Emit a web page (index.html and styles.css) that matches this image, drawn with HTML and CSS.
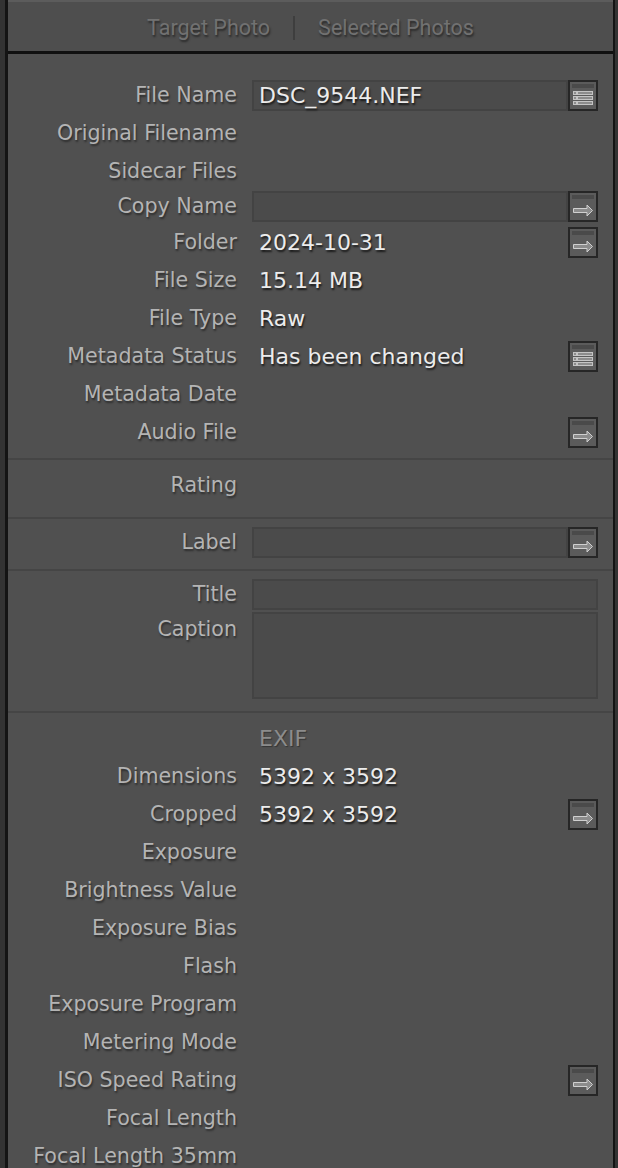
FILE: index.html
```html
<!DOCTYPE html>
<html lang="en">
<head>
<meta charset="utf-8">
<title>Metadata</title>
<link rel="stylesheet" href="styles.css">
</head>
<body>
<div class="panel">
  <div class="tabs">
    <span class="tab">Target Photo</span>
    <span class="tab-sep"></span>
    <span class="tab">Selected Photos</span>
  </div>

  <div class="group g-file">
    <div class="row">
      <div class="label">File Name</div>
      <div class="value">
        <div class="field"><span class="field-text">DSC_9544.NEF</span></div>
        <span class="btn"><svg viewBox="0 0 26 27" width="26" height="27"><rect x="2" y="2" width="22" height="4" fill="#4a4a4a"/><g fill="#8c8c8c" stroke="#c4c4c4" stroke-width="1"><rect x="3.5" y="9.5" width="3" height="3"/><rect x="7.5" y="9.5" width="15" height="3"/><rect x="3.5" y="14.5" width="3" height="3"/><rect x="7.5" y="14.5" width="15" height="3"/><rect x="3.5" y="19.5" width="3" height="3"/><rect x="7.5" y="19.5" width="15" height="3"/></g></svg></span>
      </div>
    </div>
    <div class="row">
      <div class="label">Original Filename</div>
      <div class="value"></div>
    </div>
    <div class="row h37">
      <div class="label">Sidecar Files</div>
      <div class="value"></div>
    </div>
    <div class="row h34">
      <div class="label">Copy Name</div>
      <div class="value">
        <div class="field"></div>
        <span class="btn"><svg viewBox="0 0 26 27" width="26" height="27"><rect x="2" y="2" width="22" height="4" fill="#4a4a4a"/><path d="M3.5 15.5 H17 V12 L22.5 17.5 L17 23 V19.5 H3.5 Z" fill="#8c8c8c" stroke="#d0d0d0" stroke-width="1"/></svg></span>
      </div>
    </div>
    <div class="row">
      <div class="label">Folder</div>
      <div class="value">
        <span class="text">2024-10-31</span>
        <span class="btn"><svg viewBox="0 0 26 27" width="26" height="27"><rect x="2" y="2" width="22" height="4" fill="#4a4a4a"/><path d="M3.5 15.5 H17 V12 L22.5 17.5 L17 23 V19.5 H3.5 Z" fill="#8c8c8c" stroke="#d0d0d0" stroke-width="1"/></svg></span>
      </div>
    </div>
    <div class="row">
      <div class="label">File Size</div>
      <div class="value"><span class="text">15.14 MB</span></div>
    </div>
    <div class="row">
      <div class="label">File Type</div>
      <div class="value"><span class="text">Raw</span></div>
    </div>
    <div class="row">
      <div class="label">Metadata Status</div>
      <div class="value">
        <span class="text">Has been changed</span>
        <span class="btn"><svg viewBox="0 0 26 27" width="26" height="27"><rect x="2" y="2" width="22" height="4" fill="#4a4a4a"/><g fill="#8c8c8c" stroke="#c4c4c4" stroke-width="1"><rect x="3.5" y="9.5" width="3" height="3"/><rect x="7.5" y="9.5" width="15" height="3"/><rect x="3.5" y="14.5" width="3" height="3"/><rect x="7.5" y="14.5" width="15" height="3"/><rect x="3.5" y="19.5" width="3" height="3"/><rect x="7.5" y="19.5" width="15" height="3"/></g></svg></span>
      </div>
    </div>
    <div class="row">
      <div class="label">Metadata Date</div>
      <div class="value"></div>
    </div>
    <div class="row">
      <div class="label">Audio File</div>
      <div class="value">
        <span class="btn"><svg viewBox="0 0 26 27" width="26" height="27"><rect x="2" y="2" width="22" height="4" fill="#4a4a4a"/><path d="M3.5 15.5 H17 V12 L22.5 17.5 L17 23 V19.5 H3.5 Z" fill="#8c8c8c" stroke="#d0d0d0" stroke-width="1"/></svg></span>
      </div>
    </div>
  </div>

  <div class="group g-rating">
    <div class="row">
      <div class="label">Rating</div>
      <div class="value"></div>
    </div>
  </div>

  <div class="group g-label">
    <div class="row">
      <div class="label">Label</div>
      <div class="value">
        <div class="field"></div>
        <span class="btn"><svg viewBox="0 0 26 27" width="26" height="27"><rect x="2" y="2" width="22" height="4" fill="#4a4a4a"/><path d="M3.5 15.5 H17 V12 L22.5 17.5 L17 23 V19.5 H3.5 Z" fill="#8c8c8c" stroke="#d0d0d0" stroke-width="1"/></svg></span>
      </div>
    </div>
  </div>

  <div class="group g-title">
    <div class="row h30">
      <div class="label">Title</div>
      <div class="value"><div class="field"></div></div>
    </div>
    <div class="row top">
      <div class="label">Caption</div>
      <div class="value"><div class="area"></div></div>
    </div>
  </div>

  <div class="group g-exif">
    <div class="row">
      <div class="label"></div>
      <div class="value"><span class="text heading">EXIF</span></div>
    </div>
    <div class="row">
      <div class="label">Dimensions</div>
      <div class="value"><span class="text">5392 x 3592</span></div>
    </div>
    <div class="row">
      <div class="label">Cropped</div>
      <div class="value">
        <span class="text">5392 x 3592</span>
        <span class="btn"><svg viewBox="0 0 26 27" width="26" height="27"><rect x="2" y="2" width="22" height="4" fill="#4a4a4a"/><path d="M3.5 15.5 H17 V12 L22.5 17.5 L17 23 V19.5 H3.5 Z" fill="#8c8c8c" stroke="#d0d0d0" stroke-width="1"/></svg></span>
      </div>
    </div>
    <div class="row"><div class="label">Exposure</div><div class="value"></div></div>
    <div class="row"><div class="label">Brightness Value</div><div class="value"></div></div>
    <div class="row"><div class="label">Exposure Bias</div><div class="value"></div></div>
    <div class="row"><div class="label">Flash</div><div class="value"></div></div>
    <div class="row"><div class="label">Exposure Program</div><div class="value"></div></div>
    <div class="row"><div class="label">Metering Mode</div><div class="value"></div></div>
    <div class="row">
      <div class="label">ISO Speed Rating</div>
      <div class="value">
        <span class="btn"><svg viewBox="0 0 26 27" width="26" height="27"><rect x="2" y="2" width="22" height="4" fill="#4a4a4a"/><path d="M3.5 15.5 H17 V12 L22.5 17.5 L17 23 V19.5 H3.5 Z" fill="#8c8c8c" stroke="#d0d0d0" stroke-width="1"/></svg></span>
      </div>
    </div>
    <div class="row"><div class="label">Focal Length</div><div class="value"></div></div>
    <div class="row"><div class="label">Focal Length 35mm</div><div class="value"></div></div>
  </div>
</div>
</body>
</html>
```

FILE: styles.css
```css
html, body {
  margin: 0;
  padding: 0;
  background: #333333;
  height: 1168px;
  overflow: hidden;
}

.panel {
  margin-left: 5px;
  width: 605px;
  min-height: 1168px;
  background: #505050;
  border-left: 3px solid #141414;
  border-right: 2px solid #141414;
  font-family: "DejaVu Sans", sans-serif;
}

.tabs {
  height: 49px;
  border-top: 2px solid #5c5c5c;
  border-bottom: 3px solid #101010;
  background: #4e4e4e;
  display: flex;
  align-items: center;
  justify-content: center;
  gap: 23px;
  padding-top: 2px;
  box-sizing: border-box;
  height: 54px;
  font-family: Roboto, "Liberation Sans", sans-serif;
  font-size: 21.5px;
  color: #717171;
  text-shadow: 1px 2px 2px #2a2a2a;
}

.tab-sep {
  width: 2px;
  height: 24px;
  background: #3e3e3e;
}

.group {
  border-top: 2px solid #454545;
}
.g-file {
  border-top: 0;
  padding: 22px 0 7px;
}
.g-rating { padding: 6px 0 13px; }
.g-label { padding: 4px 0 8px; }
.g-title { padding: 8px 0 12px; }
.g-exif { padding: 6px 0 0; }

.row {
  display: flex;
  align-items: center;
  height: 38px;
}
.row.h37 { height: 37px; }
.row.h34 { height: 34px; }
.row.h30 { height: 30px; margin-bottom: 3px; }
.row.top { height: auto; align-items: flex-start; }

.label {
  width: 229px;
  flex: none;
  text-align: right;
  font-size: 20.6px;
  color: #b4b4b4;
  text-shadow: 1px 2px 2px rgba(0, 0, 0, 0.45);
  white-space: nowrap;
}
.row.top .label {
  line-height: 34px;
}

.value {
  margin-left: 15px;
  width: 346px;
  flex: none;
  display: flex;
  align-items: center;
}

.text {
  padding-left: 7px;
  font-size: 22px;
  color: #ececec;
  text-shadow: 1px 2px 2px rgba(0, 0, 0, 0.7);
  white-space: nowrap;
}
.text.heading {
  color: #8c8c8c;
  text-shadow: 1px 1px 1px rgba(0, 0, 0, 0.35);
}

.field {
  flex: 1;
  height: 27px;
  border: 2px solid #434343;
  background: #4b4b4b;
  display: flex;
  align-items: center;
}
.field-text {
  padding-left: 5px;
  font-size: 22px;
  color: #ececec;
  text-shadow: 1px 2px 2px rgba(0, 0, 0, 0.7);
}

.area {
  flex: 1;
  height: 83px;
  border: 2px solid #434343;
  background: #4b4b4b;
}

.btn {
  margin-left: auto;
  flex: none;
  width: 26px;
  height: 27px;
  border: 2px solid #262626;
  background: #5b5b5b;
  display: block;
}
.btn svg { display: block; }
```
